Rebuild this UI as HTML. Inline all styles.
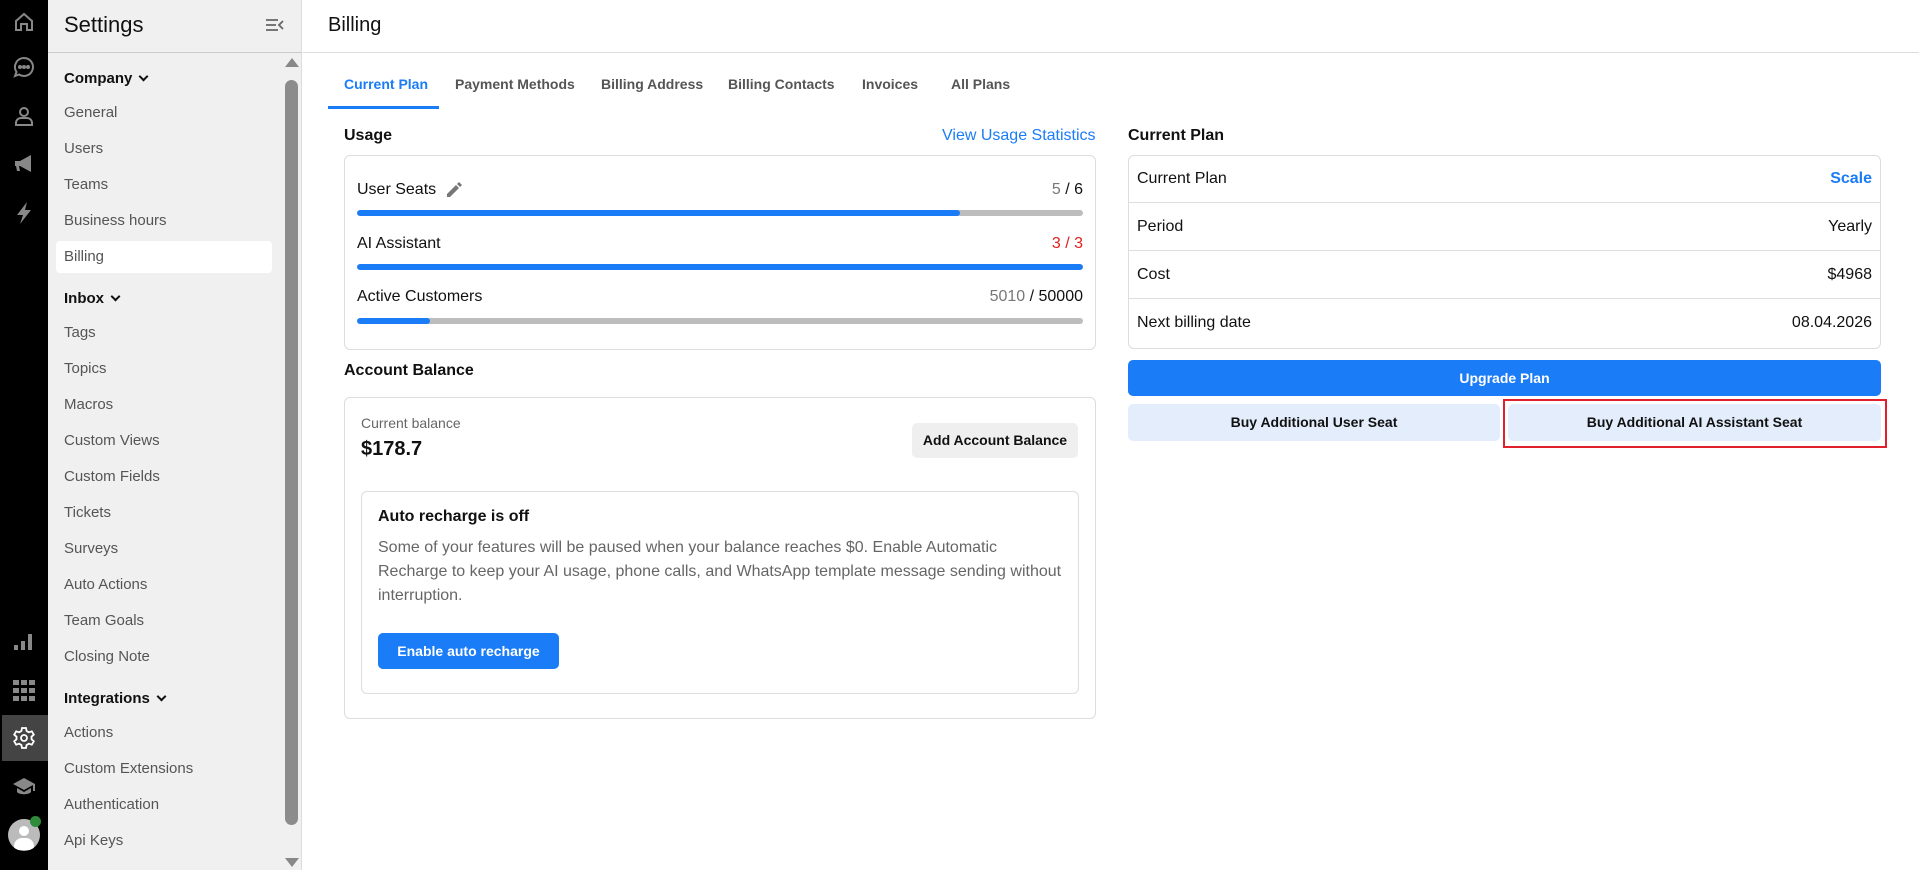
<!DOCTYPE html>
<html><head><meta charset="utf-8"><style>
*{box-sizing:border-box;margin:0;padding:0}
body{width:1919px;height:870px;overflow:hidden;font-family:"Liberation Sans",Arial,sans-serif;background:#fff;position:relative;color:#111}
.a{position:absolute}
.rail{left:0;top:0;width:48px;height:870px;background:#000}
.side{left:48px;top:0;width:254px;height:870px;background:#f0f0f0;border-right:1px solid #ddd}
.si{position:absolute;left:64px;font-size:15px;color:#555;line-height:18px}
.sh{position:absolute;left:64px;font-size:15px;color:#111;font-weight:bold;line-height:18px}
.chev{display:inline-block;width:7px;height:7px;border-right:2px solid #111;border-bottom:2px solid #111;transform:rotate(45deg);margin-left:8px;position:relative;top:-3px}
.tab{position:absolute;top:76px;font-size:14px;font-weight:bold;color:#555}
.card{position:absolute;border:1px solid #ddd;border-radius:6px;background:#fff}
.lbl{position:absolute;font-size:16px;color:#111}
.bar{position:absolute;left:357px;width:726px;height:6px;border-radius:3px;background:#bdbdbd;overflow:hidden}
.bar i{display:block;height:100%;background:#1a7cf7;border-radius:3px}
.row{position:absolute;left:1128px;width:753px;height:48px;border-bottom:1px solid #ddd;font-size:16px;line-height:48px;padding:0 9px}
.row span{float:right}
.btn{position:absolute;border-radius:5px;font-size:14px;font-weight:bold;text-align:center}
</style></head><body>
<div class="a rail"></div>
<svg class="a" style="left:12px;top:10px" width="24" height="24" viewBox="0 0 24 24" fill="none" stroke="#888" stroke-width="2"><path d="M4 11L12 4l8 7v9h-5v-6h-6v6H4z"/></svg>
<svg class="a" style="left:12px;top:55px" width="24" height="24" viewBox="0 0 24 24" fill="none" stroke="#888" stroke-width="2"><path d="M12 3a9 9 0 1 1-5 16.5L3 21l1.5-4A9 9 0 0 1 12 3z"/><circle cx="8" cy="12" r="1" fill="#888"/><circle cx="12" cy="12" r="1" fill="#888"/><circle cx="16" cy="12" r="1" fill="#888"/></svg>
<svg class="a" style="left:12px;top:104px" width="24" height="24" viewBox="0 0 24 24" fill="none" stroke="#888" stroke-width="2"><circle cx="12" cy="8" r="4"/><path d="M4 21v-2a5 5 0 0 1 5-5h6a5 5 0 0 1 5 5v2z"/></svg>
<svg class="a" style="left:12px;top:152px" width="24" height="24" viewBox="0 0 24 24" fill="#888"><path d="M3 9h5l11-6v17L8 14H7l1 5H5l-1-5H3z"/></svg>
<svg class="a" style="left:14px;top:201px" width="20" height="24" viewBox="0 0 20 24" fill="#888"><path d="M13 1L3 14h6l-3 9 11-14h-6z"/></svg>
<svg class="a" style="left:13px;top:631px" width="22" height="22" viewBox="0 0 22 22" fill="#888"><rect x="1" y="14" width="4" height="5"/><rect x="8" y="10" width="4" height="9"/><rect x="15" y="3" width="4" height="16"/></svg>
<svg class="a" style="left:13px;top:680px" width="22" height="22" viewBox="0 0 22 22" fill="#888"><g><rect x="0" y="0" width="6" height="5"/><rect x="8" y="0" width="6" height="5"/><rect x="16" y="0" width="6" height="5"/><rect x="0" y="8" width="6" height="5"/><rect x="8" y="8" width="6" height="5"/><rect x="16" y="8" width="6" height="5"/><rect x="0" y="16" width="6" height="5"/><rect x="8" y="16" width="6" height="5"/><rect x="16" y="16" width="6" height="5"/></g></svg>
<div class="a" style="left:2px;top:715px;width:46px;height:46px;background:#444"></div>
<svg class="a" style="left:12px;top:726px" width="24" height="24" viewBox="0 0 24 24" fill="none" stroke="#fff" stroke-width="1.8"><path d="M10 2h4l.6 3 2.3 1.3 2.9-1 2 3.4-2.3 2 .1 2.6 2.2 2-2 3.4-2.9-1-2.3 1.3L14 22h-4l-.6-3-2.3-1.3-2.9 1-2-3.4 2.3-2V10.7L2.2 8.7l2-3.4 2.9 1L9.4 5z"/><circle cx="12" cy="12" r="3"/></svg>
<svg class="a" style="left:12px;top:776px" width="24" height="22" viewBox="0 0 24 22" fill="#888"><path d="M12 2L1 8l11 6 9-5v6h2V8z"/><path d="M5 12v4c2 3 12 3 14 0v-4l-7 4z"/></svg>
<div class="a" style="left:8px;top:819px;width:32px;height:32px;border-radius:50%;background:#bbb;overflow:hidden"><div class="a" style="left:11px;top:7px;width:10px;height:10px;border-radius:50%;background:#fff"></div><div class="a" style="left:6px;top:19px;width:20px;height:12px;border-radius:8px 8px 0 0;background:#fff"></div></div>
<div class="a" style="left:30px;top:816px;width:11px;height:11px;border-radius:50%;background:#2e8b3a"></div>

<div class="a side"></div>
<div class="a" style="left:48px;top:52px;width:254px;height:1px;background:#ccc"></div>
<div class="a" style="left:64px;top:12px;font-size:22px;color:#111">Settings</div>
<svg class="a" style="left:265px;top:17px" width="20" height="16" viewBox="0 0 20 16" fill="none" stroke="#666" stroke-width="1.8"><path d="M1 3h12M1 8h10M1 13h12M18 4l-4 4 4 4"/></svg>
<div class="a" style="left:285px;top:58px;width:0;height:0;border-left:7px solid transparent;border-right:7px solid transparent;border-bottom:9px solid #888"></div>
<div class="a" style="left:285px;top:80px;width:13px;height:745px;border-radius:7px;background:#8c8c8c"></div>
<div class="a" style="left:285px;top:858px;width:0;height:0;border-left:7px solid transparent;border-right:7px solid transparent;border-top:9px solid #888"></div>
<div class="a" style="left:56px;top:241px;width:216px;height:32px;background:#fff;border-radius:4px"></div>
<div class="sh" style="top:70px">Company<span class="chev"></span></div>
<div class="si" style="top:104px">General</div>
<div class="si" style="top:140px">Users</div>
<div class="si" style="top:176px">Teams</div>
<div class="si" style="top:212px">Business hours</div>
<div class="si" style="top:248px">Billing</div>
<div class="sh" style="top:290px">Inbox<span class="chev"></span></div>
<div class="si" style="top:324px">Tags</div>
<div class="si" style="top:360px">Topics</div>
<div class="si" style="top:396px">Macros</div>
<div class="si" style="top:432px">Custom Views</div>
<div class="si" style="top:468px">Custom Fields</div>
<div class="si" style="top:504px">Tickets</div>
<div class="si" style="top:540px">Surveys</div>
<div class="si" style="top:576px">Auto Actions</div>
<div class="si" style="top:612px">Team Goals</div>
<div class="si" style="top:648px">Closing Note</div>
<div class="sh" style="top:690px">Integrations<span class="chev"></span></div>
<div class="si" style="top:724px">Actions</div>
<div class="si" style="top:760px">Custom Extensions</div>
<div class="si" style="top:796px">Authentication</div>
<div class="si" style="top:832px">Api Keys</div>

<div class="a" style="left:328px;top:14px;font-size:20px;color:#111">Billing</div>
<div class="a" style="left:303px;top:52px;width:1616px;height:1px;background:#ddd"></div>
<div class="tab" style="left:344px;color:#1a7cf7">Current Plan</div>
<div class="a" style="left:328px;top:106px;width:111px;height:3px;background:#1a7cf7"></div>
<div class="tab" style="left:455px">Payment Methods</div>
<div class="tab" style="left:601px">Billing Address</div>
<div class="tab" style="left:728px">Billing Contacts</div>
<div class="tab" style="left:862px">Invoices</div>
<div class="tab" style="left:951px">All Plans</div>

<div class="a" style="left:344px;top:127px;font-size:16px;font-weight:bold">Usage</div>
<div class="a" style="left:942px;top:127px;font-size:16px;color:#1a7cf7">View Usage Statistics</div>
<div class="card" style="left:344px;top:155px;width:752px;height:195px"></div>
<div class="lbl" style="left:357px;top:181px">User Seats</div>
<svg class="a" style="left:444px;top:180px" width="20" height="20" viewBox="0 0 20 20" fill="#777"><path d="M3 14l9-9 3 3-9 9H3zM13 4l2-2 3 3-2 2z"/></svg>
<div class="lbl" style="right:836px;top:181px;color:#777">5 <span style="color:#111">/ 6</span></div>
<div class="bar" style="top:210px"><i style="width:83%"></i></div>
<div class="lbl" style="left:357px;top:235px">AI Assistant</div>
<div class="lbl" style="right:836px;top:235px;color:#e02020">3 / 3</div>
<div class="bar" style="top:264px"><i style="width:100%"></i></div>
<div class="lbl" style="left:357px;top:288px">Active Customers</div>
<div class="lbl" style="right:836px;top:288px;color:#777">5010 <span style="color:#111">/ 50000</span></div>
<div class="bar" style="top:318px"><i style="width:10%"></i></div>

<div class="a" style="left:344px;top:362px;font-size:16px;font-weight:bold">Account Balance</div>
<div class="card" style="left:344px;top:397px;width:752px;height:322px"></div>
<div class="a" style="left:361px;top:415px;font-size:14px;color:#666">Current balance</div>
<div class="a" style="left:361px;top:438px;font-size:20px;font-weight:bold">$178.7</div>
<div class="btn" style="left:912px;top:423px;width:166px;height:35px;line-height:35px;background:#efefef;color:#111">Add Account Balance</div>
<div class="card" style="left:361px;top:491px;width:718px;height:203px"></div>
<div class="a" style="left:378px;top:508px;font-size:16px;font-weight:bold">Auto recharge is off</div>
<div class="a" style="left:378px;top:536px;width:690px;font-size:16px;line-height:24px;color:#666">Some of your features will be paused when your balance reaches $0. Enable Automatic Recharge to keep your AI usage, phone calls, and WhatsApp template message sending without interruption.</div>
<div class="btn" style="left:378px;top:633px;width:181px;height:36px;line-height:36px;background:#1a7cf7;color:#fff">Enable auto recharge</div>

<div class="a" style="left:1128px;top:127px;font-size:16px;font-weight:bold">Current Plan</div>
<div class="card" style="left:1128px;top:155px;width:753px;height:194px;overflow:hidden"></div>
<div class="row" style="top:155px">Current Plan<span style="color:#1a7cf7;font-weight:bold">Scale</span></div>
<div class="row" style="top:203px">Period<span>Yearly</span></div>
<div class="row" style="top:251px">Cost<span>$4968</span></div>
<div class="row" style="top:299px;border-bottom:none">Next billing date<span>08.04.2026</span></div>
<div class="btn" style="left:1128px;top:360px;width:753px;height:36px;line-height:36px;background:#1a7cf7;color:#fff">Upgrade Plan</div>
<div class="btn" style="left:1128px;top:404px;width:372px;height:37px;line-height:37px;background:#e3edfc;color:#111">Buy Additional User Seat</div>
<div class="btn" style="left:1508px;top:404px;width:373px;height:37px;line-height:37px;background:#e3edfc;color:#111">Buy Additional AI Assistant Seat</div>
<div class="a" style="left:1503px;top:399px;width:384px;height:49px;border:2px solid #e0202a"></div>
</body></html>
